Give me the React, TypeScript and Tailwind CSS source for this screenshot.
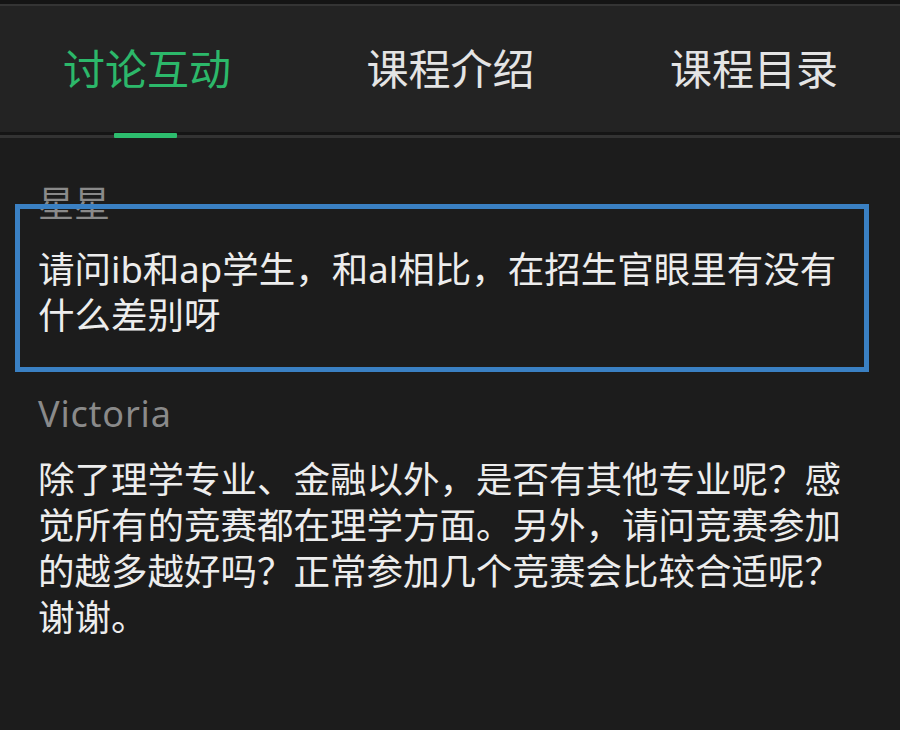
import React from "react";

const font = {
  fontFamily: '"Noto Sans", "Noto Sans CJK SC", sans-serif',
};

function Tab({ label, active }: { label: string; active?: boolean }) {
  return (
    <div className="relative flex h-full items-center">
      <span
        className={
          "text-[42px] leading-none " +
          (active ? "text-[#2cb86a]" : "text-[#e4e4e4]")
        }
      >
        {label}
      </span>
      {active && (
        <div className="absolute bottom-[-6px] left-1/2 h-[5px] w-[63px] -translate-x-[33px] rounded-[1px] bg-[#2dbd6e]" />
      )}
    </div>
  );
}

function Comment({
  name,
  text,
  highlight,
  nameClass,
}: {
  name: string;
  text: string;
  highlight?: boolean;
  nameClass?: string;
}) {
  return (
    <div className="relative">
      {highlight && (
        <div className="pointer-events-none absolute left-[-23px] top-[23px] h-[168px] w-[854px] border-[5px] border-[#3a80c3]" />
      )}
      <div
        className={
          "mb-[19px] text-[36px] leading-[46px] text-[#8a8a8a] " +
          (nameClass ?? "")
        }
      >
        {name}
      </div>
      <div className="w-[810px] text-[36.5px] leading-[46px] text-[#ededed]">
        {text}
      </div>
    </div>
  );
}

export default function App() {
  return (
    <div
      className="flex h-[730px] w-[900px] flex-col overflow-hidden bg-[#1c1c1c]"
      style={font}
    >
      <div className="h-[4px] bg-[#141414]" />
      <div className="h-[2px] bg-[#343434]" />
      <div className="flex h-[126px] items-center justify-between bg-[#232323] pl-[63px] pr-[62px]">
        <Tab label="讨论互动" active />
        <Tab label="课程介绍" />
        <Tab label="课程目录" />
      </div>
      <div className="h-[3px] bg-[#151515]" />
      <div className="h-[3px] bg-[#333333]" />
      <div className="flex flex-col gap-[53px] pl-[38px] pt-[43px]">
        <Comment
          name="星星"
          text="请问ib和ap学生，和al相比，在招生官眼里有没有什么差别呀"
          highlight
        />
        <Comment
          name="Victoria"
          nameClass="tracking-[0.8px]"
          text="除了理学专业、金融以外，是否有其他专业呢？感觉所有的竞赛都在理学方面。另外，请问竞赛参加的越多越好吗？正常参加几个竞赛会比较合适呢？谢谢。"
        />
      </div>
    </div>
  );
}
